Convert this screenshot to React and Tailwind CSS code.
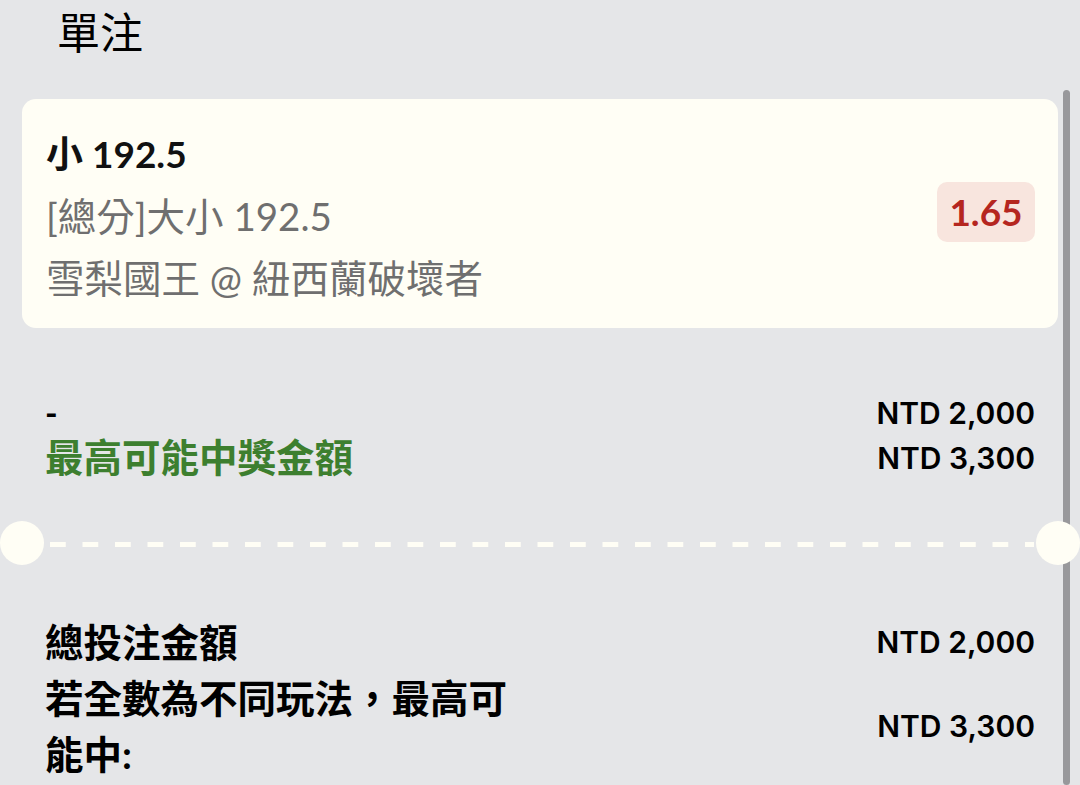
export default function App() {
  const cjk = "font-['Lato','Noto_Sans_CJK_TC',sans-serif]";
  const num = "font-['Inter','Noto_Sans_CJK_TC',sans-serif]";
  return (
    <div className={`relative min-h-[785px] w-[1080px] overflow-hidden bg-[#e5e6e8] ${cjk}`}>
      <div className="absolute right-[10px] top-[90px] bottom-0 w-[7px] rounded-full bg-[#98989b]" />
      <div className="pl-[57px] pt-[8px] text-[43px] leading-[50px] text-black">單注</div>

      <div className="mx-[22px] mt-[41px] flex items-center justify-between rounded-[14px] bg-[#fffef5] pl-[24px] pr-[23px] pt-[24px] pb-[19px]">
        <div className="flex flex-col">
          <div className="text-[37px] font-bold leading-[62px] text-[#111]">小 192.5</div>
          <div className="text-[38.5px] leading-[62px] text-[#6f6f6f]">[總分]大小 192.5</div>
          <div className="text-[38.5px] leading-[62px] text-[#6f6f6f]">雪梨國王 @ 紐西蘭破壞者</div>
        </div>
        <div className="mb-[8px] flex h-[60px] w-[98px] items-center justify-center rounded-[10px] bg-[#f8e5de] text-[37px] font-bold text-[#b5261f]">
          1.65
        </div>
      </div>

      <div className="mt-[63px] flex justify-between px-[45px]">
        <div className="flex flex-col">
          <div className="text-[34px] font-bold leading-[44px] text-black">-</div>
          <div className="text-[38.5px] font-bold leading-[44px] text-[#3d7f2f]">最高可能中獎金額</div>
        </div>
        <div className={`flex flex-col items-end ${num}`}>
          <div className="text-[30px] font-semibold leading-[45px] text-black">NTD 2,000</div>
          <div className="text-[30px] font-semibold leading-[45px] text-black">NTD 3,300</div>
        </div>
      </div>

      <div className="relative mt-[40px] h-[44px]">
        <div className="absolute left-0 top-0 h-[44px] w-[44px] rounded-full bg-[#fffef5]" />
        <div className="absolute right-0 top-0 h-[44px] w-[44px] rounded-full bg-[#fffef5]" />
        <div className="absolute left-[50px] right-[46px] top-[21px] h-[5px] bg-[linear-gradient(to_right,#fffef5_16px,transparent_16px)] bg-[length:32.5px_5px]" />
      </div>

      <div className="mt-[49px] flex flex-col gap-0 px-[45px]">
        <div className="flex items-center justify-between">
          <div className="text-[38.5px] font-bold leading-[56px] text-black">總投注金額</div>
          <div className={`text-[30px] font-semibold text-black ${num}`}>NTD 2,000</div>
        </div>
        <div className="flex items-center justify-between">
          <div className="max-w-[480px] text-[38.5px] font-bold leading-[56px] text-black">若全數為不同玩法，最高可能中:</div>
          <div className={`text-[30px] font-semibold text-black ${num}`}>NTD 3,300</div>
        </div>
      </div>
    </div>
  );
}
